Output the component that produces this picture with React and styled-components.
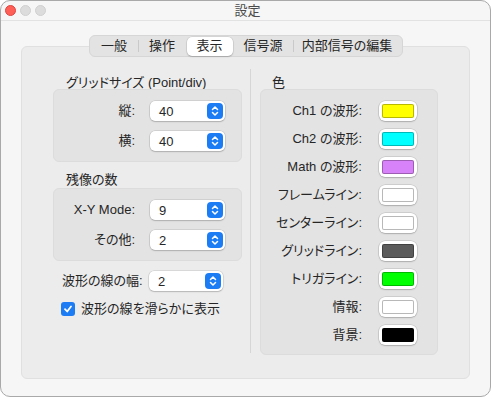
import { Fragment } from "react"
import styled, { createGlobalStyle } from "styled-components"

const GlobalStyle = createGlobalStyle`
  html, body {
    margin: 0;
    background: #ffffff;
  }
  body {
    font-family: "Liberation Sans", "Noto Sans CJK JP", sans-serif;
    font-feature-settings: "palt";
    color: #262626;
  }
`

const Window = styled.div`
  width: 491px;
  height: 397px;
  box-sizing: border-box;
  border: 1px solid #a9a9a9;
  border-radius: 10px;
  background: #f6f6f6;
  overflow: hidden;
  display: flex;
  flex-direction: column;
`

const TitleBar = styled.div`
  height: 20px;
  box-sizing: border-box;
  border-bottom: 1px solid #e2e2e2;
  display: grid;
  grid-template-columns: 1fr auto 1fr;
  align-items: center;
  padding-left: 4px;
`

const Lights = styled.div`
  display: flex;
  gap: 4px;
`

const Light = styled.span`
  width: 11px;
  height: 11px;
  border-radius: 50%;
  box-sizing: border-box;
  background: ${({ $color }) => $color};
  border: 0.5px solid ${({ $edge }) => $edge};
`

const Title = styled.div`
  font-size: 13px;
  line-height: 16px;
  color: #4a4a4a;
`

const Body = styled.div`
  flex: 1;
  display: flex;
  flex-direction: column;
  align-items: center;
  padding: 14px 20px 17px;
`

const TabBar = styled.div`
  position: relative;
  z-index: 1;
  display: flex;
  align-items: center;
  height: 22px;
  box-sizing: border-box;
  padding: 0 1px;
  background: #e3e3e3;
  border: 1px solid #d6d6d6;
  border-radius: 6px;
`

const Tab = styled.div`
  height: 19px;
  display: flex;
  align-items: center;
  justify-content: center;
  width: ${({ $w }) => $w}px;
  font-size: 13px;
  line-height: 16px;
  border-radius: 5px;
  background: ${({ $active }) => ($active ? "#ffffff" : "transparent")};
  box-shadow: ${({ $active }) =>
    $active ? "0 0 0 0.5px rgba(0,0,0,0.12), 0 1px 1.5px rgba(0,0,0,0.18)" : "none"};
`

const TabSep = styled.span`
  width: 1px;
  height: 12px;
  background: ${({ $hidden }) => ($hidden ? "transparent" : "#c9c9c9")};
`

const TabBox = styled.div`
  flex: 1;
  align-self: stretch;
  margin-top: -11px;
  box-sizing: border-box;
  border: 1px solid #e0e0e0;
  border-radius: 6px;
  background: #ececec;
  display: flex;
  padding: 29px 31px 0;
`

const LeftCol = styled.div`
  width: 189px;
  display: flex;
  flex-direction: column;
`

const RightCol = styled.div`
  width: 178px;
  display: flex;
  flex-direction: column;
`

const Divider = styled.div`
  width: 1px;
  background: #d6d6d6;
  margin: -7px 9px 25px 8px;
`

const Heading = styled.div`
  font-size: 13px;
  line-height: 13px;
  padding-left: ${({ $indent }) => $indent}px;
  margin-top: ${({ $top }) => $top || 0}px;
  margin-bottom: ${({ $bottom }) => $bottom || 0}px;
`

const Group = styled.div`
  background: #e3e3e3;
  border: 1px solid #dcdcdc;
  border-radius: 6px;
  box-sizing: border-box;
  display: flex;
  flex-direction: column;
  gap: ${({ $gap }) => $gap}px;
  padding: ${({ $pad }) => $pad};
`

const FieldRow = styled.div`
  display: flex;
  align-items: center;
  height: 20px;
  gap: ${({ $gap }) => $gap}px;
  padding-left: ${({ $indent }) => $indent || 0}px;
  margin-top: ${({ $top }) => $top || 0}px;
`

const Label = styled.div`
  width: ${({ $w }) => $w}px;
  text-align: ${({ $align }) => $align || "right"};
  font-size: 13px;
  line-height: 16px;
  white-space: nowrap;
`

const Popup = styled.div`
  width: ${({ $w }) => $w}px;
  height: 20px;
  box-sizing: border-box;
  background: #ffffff;
  border-radius: 5px;
  box-shadow: 0 0 0 0.5px rgba(0, 0, 0, 0.16), 0 1px 1.5px rgba(0, 0, 0, 0.16);
  display: flex;
  align-items: center;
  justify-content: space-between;
  padding: 0 2px 0 9px;
  font-size: 13px;
`

const Stepper = styled.span`
  width: 16px;
  height: 16px;
  border-radius: 4px;
  background: #1b7cf4;
  display: flex;
  align-items: center;
  justify-content: center;
`

const Well = styled.div`
  width: 38px;
  height: 20px;
  box-sizing: border-box;
  padding: 3px;
  background: #ffffff;
  border-radius: 6px;
  box-shadow: 0 0 0 0.5px rgba(0, 0, 0, 0.18), 0 1px 1.5px rgba(0, 0, 0, 0.16);
`

const Swatch = styled.div`
  height: 100%;
  box-sizing: border-box;
  border-radius: 2px;
  background: ${({ $color }) => $color};
  border: 1px solid rgba(0, 0, 0, 0.28);
`

const CheckRow = styled.label`
  display: flex;
  align-items: center;
  gap: 6px;
  padding-left: 8px;
  margin-top: 10px;
  font-size: 13px;
  line-height: 16px;
`

const CheckBox = styled.span`
  width: 14px;
  height: 14px;
  border-radius: 3px;
  background: #1b7cf4;
  display: flex;
  align-items: center;
  justify-content: center;
`

const StepperIcon = () => (
  <svg width="10" height="12" viewBox="0 0 10 12" fill="none">
    <path d="M2.5 4.5 L5 2 L7.5 4.5" stroke="#fff" strokeWidth="1.5" strokeLinecap="round" strokeLinejoin="round" />
    <path d="M2.5 7.5 L5 10 L7.5 7.5" stroke="#fff" strokeWidth="1.5" strokeLinecap="round" strokeLinejoin="round" />
  </svg>
)

const PopupButton = ({ value, width }) => (
  <Popup $w={width}>
    <span>{value}</span>
    <Stepper>
      <StepperIcon />
    </Stepper>
  </Popup>
)

const tabs = [
  { label: "一般", w: 47 },
  { label: "操作", w: 47 },
  { label: "表示", w: 46, active: true },
  { label: "信号源", w: 59 },
  { label: "内部信号の編集", w: 107 },
]

const colors = [
  { label: "Ch1 の波形:", color: "#ffff00" },
  { label: "Ch2 の波形:", color: "#00ffff" },
  { label: "Math の波形:", color: "#d882f9" },
  { label: "フレームライン:", color: "#ffffff" },
  { label: "センターライン:", color: "#ffffff" },
  { label: "グリッドライン:", color: "#5b5b5b" },
  { label: "トリガライン:", color: "#00ff00" },
  { label: "情報:", color: "#ffffff" },
  { label: "背景:", color: "#000000" },
]

const App = () => {
  return (
    <>
      <GlobalStyle />
      <Window>
        <TitleBar>
          <Lights>
            <Light $color="#fe5f57" $edge="#e0443e" />
            <Light $color="#dcdcdc" $edge="#cfcfcf" />
            <Light $color="#dcdcdc" $edge="#cfcfcf" />
          </Lights>
          <Title>設定</Title>
        </TitleBar>
        <Body>
          <TabBar>
            {tabs.map((tab, i) => (
              <Fragment key={tab.label}>
                {i > 0 && <TabSep $hidden={tab.active || tabs[i - 1].active} />}
                <Tab $w={tab.w} $active={tab.active}>
                  {tab.label}
                </Tab>
              </Fragment>
            ))}
          </TabBar>
          <TabBox>
            <LeftCol>
              <Heading $indent={13}>グリッドサイズ (Point/div)</Heading>
              <Group $gap={10} $pad="11px 0 10px 0">
                <FieldRow $gap={15}>
                  <Label $w={81}>縦:</Label>
                  <PopupButton value="40" width={75} />
                </FieldRow>
                <FieldRow $gap={15}>
                  <Label $w={81}>横:</Label>
                  <PopupButton value="40" width={75} />
                </FieldRow>
              </Group>
              <Heading $indent={13} $top={11} $bottom={2}>残像の数</Heading>
              <Group $gap={10} $pad="11px 0 10px 0">
                <FieldRow $gap={15}>
                  <Label $w={81}>X-Y Mode:</Label>
                  <PopupButton value="9" width={75} />
                </FieldRow>
                <FieldRow $gap={15}>
                  <Label $w={81}>その他:</Label>
                  <PopupButton value="2" width={75} />
                </FieldRow>
              </Group>
              <FieldRow $gap={12} $indent={9} $top={10}>
                <Label $w={75} $align="left">波形の線の幅:</Label>
                <PopupButton value="2" width={74} />
              </FieldRow>
              <CheckRow>
                <CheckBox>
                  <svg width="10" height="10" viewBox="0 0 10 10" fill="none">
                    <path d="M2 5.2 L4.2 7.5 L8 2.5" stroke="#fff" strokeWidth="1.8" strokeLinecap="round" strokeLinejoin="round" />
                  </svg>
                </CheckBox>
                波形の線を滑らかに表示
              </CheckRow>
            </LeftCol>
            <Divider />
            <RightCol>
              <Heading $indent={12}>色</Heading>
              <Group $gap={8} $pad="11px 0 9px 0">
                {colors.map((c) => (
                  <FieldRow key={c.label} $gap={17}>
                    <Label $w={101}>{c.label}</Label>
                    <Well>
                      <Swatch $color={c.color} />
                    </Well>
                  </FieldRow>
                ))}
              </Group>
            </RightCol>
          </TabBox>
        </Body>
      </Window>
    </>
  )
}

export default App
